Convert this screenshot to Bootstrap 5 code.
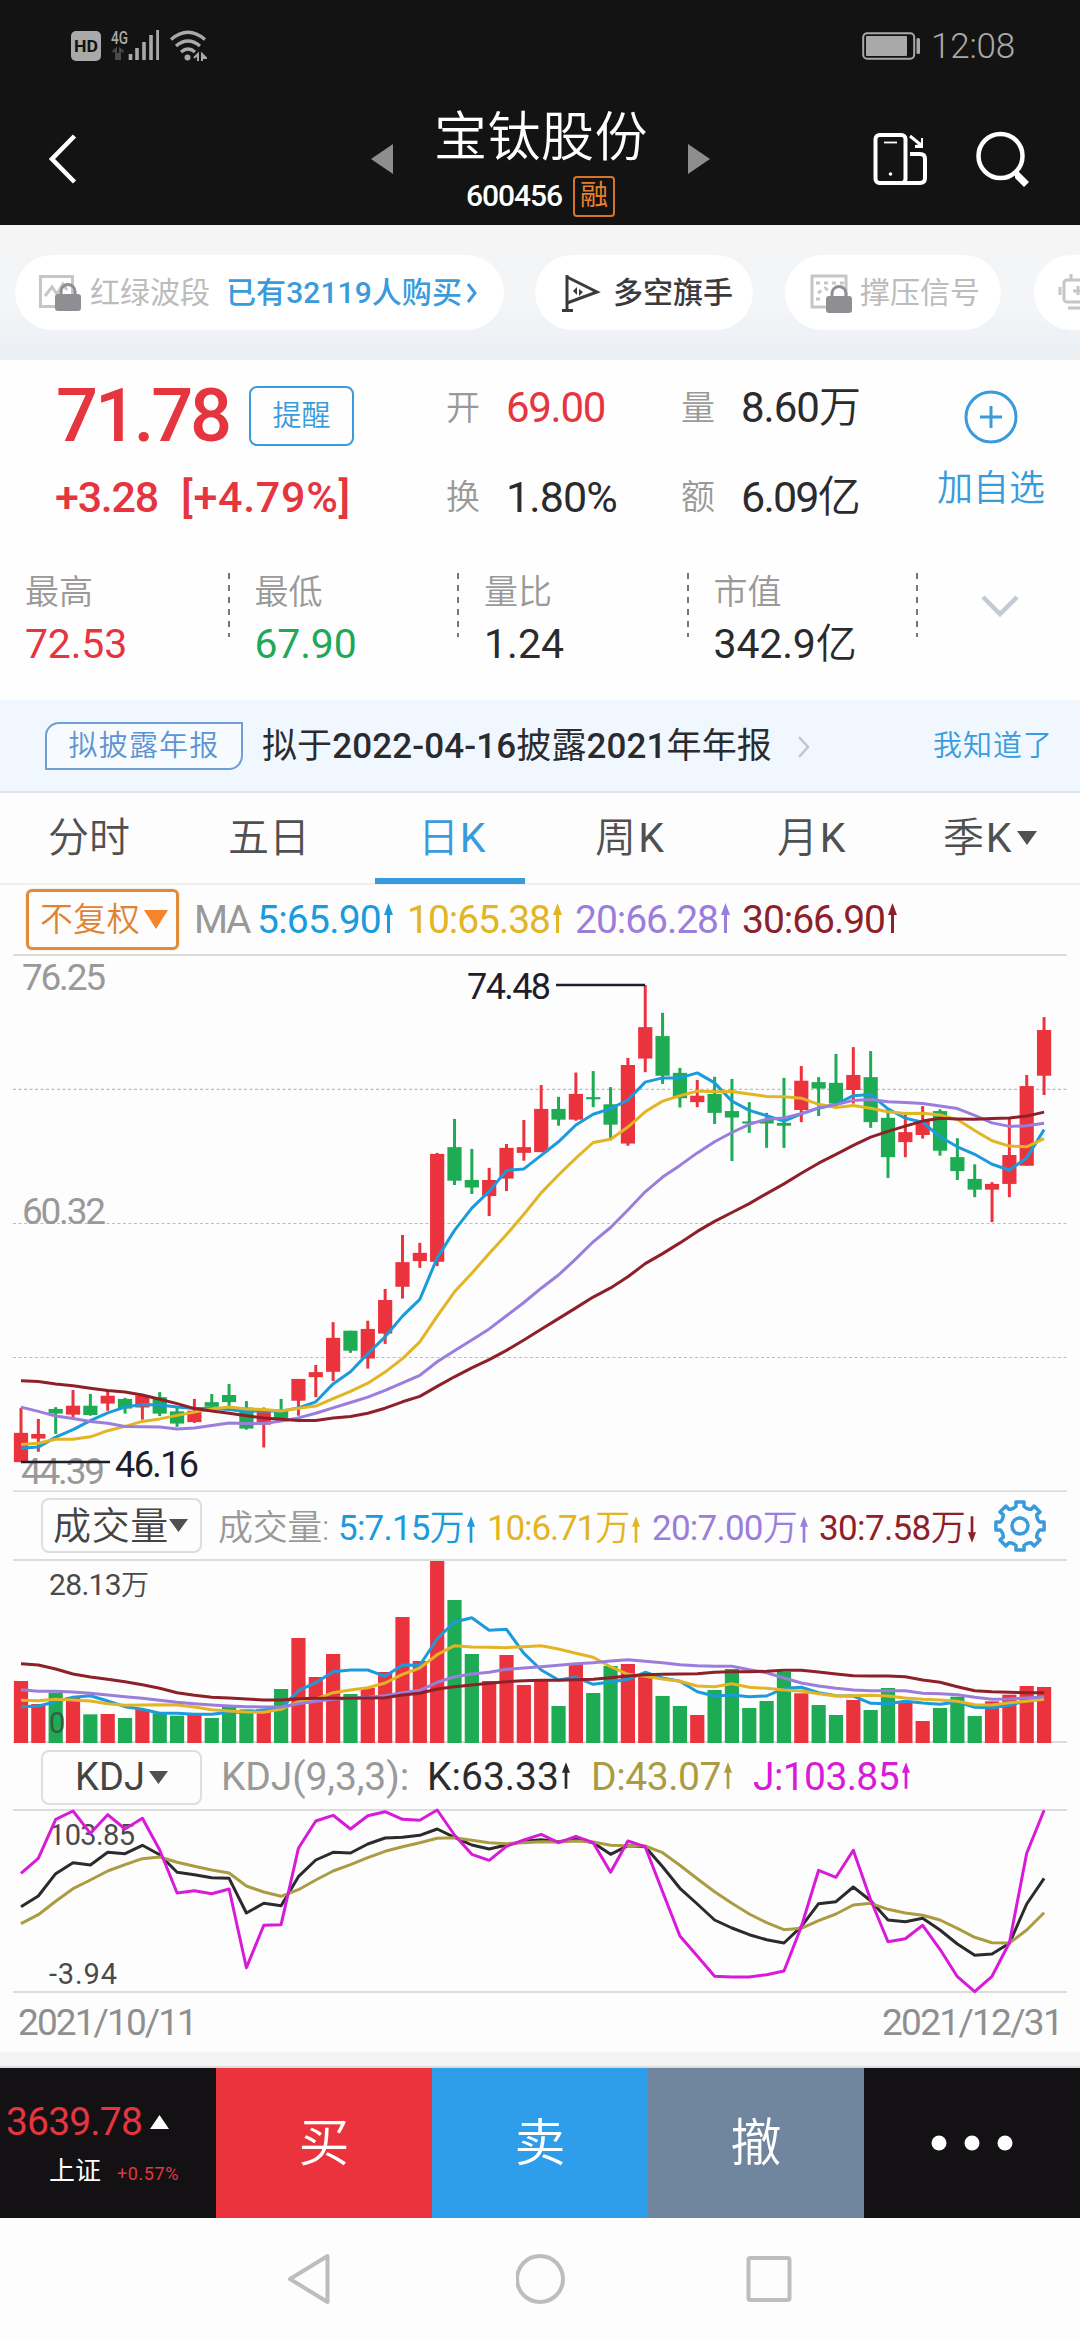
<!DOCTYPE html>
<html lang="zh-CN">
<head>
<meta charset="utf-8">
<meta name="viewport" content="width=device-width, initial-scale=1">
<title>宝钛股份 600456</title>
<link href="https://cdn.jsdelivr.net/npm/bootstrap@5.3.0/dist/css/bootstrap.min.css" rel="stylesheet">
<style>
:root{--up:#e5353f;--dn:#1fa858;--sky:#3a9bdc;--ink:#2b2b2e;--mute:#999}
body{font-family:Roboto,"Noto Sans CJK SC",sans-serif;line-height:1;color:var(--ink);background:#fdfdfe;width:1080px;overflow-x:hidden}
svg{display:block;flex:none}
.tk{display:grid;align-items:center}
.tk>*{white-space:nowrap;justify-self:start}
.lt{font-weight:350}
.md{font-weight:500}
.up{color:var(--up)}.dn{color:var(--dn)}.sky{color:var(--sky)}.mut{color:var(--mute)}
.c5{color:#1b9bdc}.c10{color:#e3b423}.c20{color:#9b7ddb}.c30{color:#8e2029}.cd{color:#ab9c44}.cj{color:#d81bd8}
.topbar{background:#131313;height:225px;color:#fff}
.status-row{height:92px;color:#a9a9a9;grid-template-columns:71px 38px 60px 693px 69px 1fr}
.status-row .clock{font-size:35px;font-weight:300}
.title-row{height:133px;grid-template-columns:49px 322px 55px 262px 184px 104px 1fr}
.title-row .title-col{padding-top:10px}
.title-row .stock{font-size:53px;height:54px;line-height:54px}
.title-row .code-line{padding-left:40px;margin-top:11px}
.title-row .code{font-size:30px}
.rong{width:42px;height:41px;border:2px solid #d5752c;border-radius:4px;color:#e8812f;font-size:28px;line-height:36px;text-align:center;margin-left:11px}
.pills{height:135px;padding:30px 0 0 15px;background:linear-gradient(#f6f5f6,#f3f5f8 60%,#ebeff3)}
.pill-i{height:75px;border-radius:38px;background:#fff;flex:none;font-size:30px;padding-left:23px;color:#bcbcbc;font-weight:500}
.pill-a{width:489px;margin-right:31px}
.pill-b{width:218px;margin-right:32px;padding-left:26px;color:#3b3b3f}
.pill-c{width:216px;margin-right:33px;padding-left:25px}
.pill-d{width:300px;padding-left:24px}
.quote{height:340px;background:#fefefe;padding-top:19px}
.q1{height:62px;font-size:42px;grid-template-columns:56px 193px 197px 60px 175px 60px 223px 1fr}
.q1 .last-price{font-size:74px}
.q1 .lbl,.q2 .lbl{font-size:34px}
.q1 .lbl,.q1 .fig{margin-top:-16px}
.remind{width:105px;height:60px;border:2.5px solid var(--sky);border-radius:8px;font-size:29px;line-height:56px;text-align:center}
.q2{height:50px;margin-top:31px;font-size:43px;grid-template-columns:55px 126px 265px 60px 175px 60px 196px 1fr}
.q2 .add{font-size:36px;margin-top:-16px}
.q3{grid-template-columns:repeat(4,229.5px) 1fr;height:96px;margin-top:51px;align-items:start}
.q3 .cellq{width:229.5px;padding-left:25px;position:relative}
.q3 .lbl{font-size:34px;line-height:38px;height:38px}
.q3 .val{font-size:41px;line-height:44px;margin-top:11px}
.q3 .chev{margin:22px 0 0 63px}
.vdash{position:absolute;right:0;top:0;width:2px;height:64px;background:repeating-linear-gradient(#777 0 6px,transparent 6px 12px)}
.notice{height:93px;background:#f0f7fe;border-bottom:2px solid #e2e6ea;font-size:35px;grid-template-columns:45px 217px 535px 136px 1fr;padding-top:2px}
.tagn{width:198px;height:48px;border:2px solid #6f9fd6;border-radius:14px 0 14px 0;color:#5d94d2;font-size:29px;line-height:45px;text-align:center;background:#f7fbff;margin-top:-2px}
.tabs{height:92px;font-size:41px;color:#505050;grid-template-columns:48px 180px 190px 177px 182px 166px 1fr;border-bottom:2px solid #eee;position:relative}
.tabs .bar{position:absolute;left:375px;bottom:-1px;width:150px;height:6px;background:#3a9bdc}
.ma{height:69px;font-size:39px;grid-template-columns:26px 168px 63px 150px 168px 167px 1fr;padding-top:1px}
.fq{width:153px;height:61px;border:3px solid #e08b3a;border-radius:6px;color:#dd8434;font-size:33px;box-shadow:0 0 2px #f6c98f;padding-left:11px;margin-top:-2px}
.ind{height:67px;font-size:35px}
.ind.vol{grid-template-columns:41px 177px 120px 149px 165px 167px 174px 1fr}
.ind.vol>span:not(.sel){padding-top:5px}
.ind.vol .arr{vertical-align:-4px}
.ind.kdj{font-size:39px;grid-template-columns:41px 180px 206px 164px 162px 1fr;height:66px}
.sel{width:161px;height:55px;border:2.5px solid #dedede;border-radius:8px;color:#444;font-size:38px}
.arr{display:inline-block;margin-left:3px;vertical-align:baseline}
.dates{height:59px;font-size:37px;color:#8f8f8f;padding:0 18px 0 18px}
.gap-strip{height:16px;background:#f3f2f4;border-bottom:2px solid #ddd}
.actions{height:150px;color:#fff;font-size:51px;background:#131113}
.actions>div{width:216px}
.bg-buy{background:#eb333e}.bg-sell{background:#2f9eea}.bg-undo{background:#70869f}
.idx{font-size:39px;padding-left:6px}
.idx .idx-name{font-size:26px}
.idx .idx-pct{font-size:18px;margin:6px 0 0 16px}
.navrow{height:122px;grid-template-columns:286px 230px 229px 1fr}
svg text{font-family:Roboto,"Noto Sans CJK SC",sans-serif}
</style>
<script src="https://cdn.jsdelivr.net/npm/bootstrap@5.3.0/dist/js/bootstrap.bundle.min.js"></script>
</head>
<body>
<svg width="0" height="0" class="position-absolute"><defs>
<symbol id="upArr" viewBox="0 0 9 30"><path d="M4.5 0 9 12H6V30H3V12H0z" fill="currentColor"/></symbol>
<symbol id="dnArr" viewBox="0 0 9 30"><path d="M4.5 30 9 18H6V0H3V18H0z" fill="currentColor"/></symbol>
<symbol id="lock" viewBox="0 0 26 28"><path d="M6 12V8.500a7 7 0 0 1 14 0V12" fill="none" stroke="#8f8f93" stroke-width="3"/><rect y="11" width="26" height="17" rx="3" fill="#8f8f93"/></symbol>
</defs></svg>

<header class="topbar">
  <div class="status-row tk pb-0">
    <i></i>
    <svg width="31" height="31" viewBox="0 0 31 31"><rect width="30" height="30" rx="5" fill="#a9a9a9"/><text x="3" y="20.500" font-size="16" font-weight="700" textLength="24" lengthAdjust="spacingAndGlyphs" fill="#131313">HD</text></svg>
    <svg width="50" height="34" viewBox="0 0 50 34"><text x="2" y="15" font-size="18" font-weight="500" textLength="17" lengthAdjust="spacingAndGlyphs" fill="#a9a9a9">4G</text><path d="M3.500 23 7 20v11M11 31V20l3.500 3M9 31v-7" stroke="#4a4a4a" stroke-width="2" fill="none"/><path d="M21.500 31v-6M28 31V19M35 31V13M42 31V6M49 31V1" stroke="#a9a9a9" stroke-width="3.600"/></svg>
    <svg width="38" height="32" viewBox="0 0 38 32"><g fill="none" stroke="#a9a9a9" stroke-width="3.200"><path d="M2 9.500Q19-5 36 9.500"/><path d="M7 16q12-10 24 0"/><path d="M12 22q7-6 14 0"/></g><circle cx="18.500" cy="27.500" r="3" fill="#a9a9a9"/><path d="M25 28l4-4v7M33 31v-7l4 4h-4" stroke="#a9a9a9" stroke-width="2" fill="none"/></svg>
    <svg width="60" height="28" viewBox="0 0 60 28"><rect x="1.200" y="1.200" width="51" height="25.600" rx="4" fill="none" stroke="#a9a9a9" stroke-width="2"/><rect x="4" y="4" width="41" height="20" rx="1" fill="#a9a9a9"/><rect x="54.500" y="6" width="3.500" height="16" rx="1.500" fill="#a9a9a9"/></svg>
    <span class="clock" data-w="82">12:08</span>
  </div>
  <div class="title-row tk">
    <i></i>
    <svg width="30" height="52" viewBox="0 0 30 52"><path d="M25.500 3 3 26l22.500 23" fill="none" stroke="#fff" stroke-width="4.500"/></svg>
    <svg width="22" height="30" viewBox="0 0 22 30"><path d="M22 0v30L0 15z" fill="#8d8d8d"/></svg>
    <div class="title-col d-flex flex-column align-items-start">
      <span class="stock lt ms-2" data-w="212">宝钛股份</span>
      <div class="code-line d-flex align-items-center"><span class="code md" data-w="94">600456</span><span class="rong">融</span></div>
    </div>
    <svg width="22" height="30" viewBox="0 0 22 30"><path d="M0 0v30l22-15z" fill="#8d8d8d"/></svg>
    <svg width="56" height="54" viewBox="0 0 56 54"><g fill="none" stroke="#fff" stroke-width="4"><rect x="3.500" y="3" width="30" height="48" rx="4"/><path d="M38 22h10q5 0 5 5v19q0 5-5 5H30"/><path d="M38 4l11 9" stroke-width="3"/></g><path d="M12 10.500h13" stroke="#fff" stroke-width="1.800"/><circle cx="18.500" cy="42" r="1.800" fill="#fff"/><path d="M51 6v10H43v-3l6-1V6z" fill="#fff"/></svg>
    <svg width="56" height="56" viewBox="0 0 56 56"><circle cx="24.500" cy="25" r="22" fill="none" stroke="#fff" stroke-width="4.500"/><path d="M42 40l11 11-5 5-9-9v-4l-2-2 3-3z" fill="#fff"/></svg>
  </div>
</header>

<section class="pills d-flex overflow-hidden">
  <div class="pill-i pill-a d-flex align-items-center">
    <svg width="44" height="38" viewBox="0 0 44 38"><rect x="2.500" y="2.500" width="32" height="30" fill="none" stroke="#c6c6c6" stroke-width="3"/><path d="M7 22l7-9 5 7 6-10 4 6" fill="none" stroke="#c6c6c6" stroke-width="3"/><use href="#lock" x="17" y="9" width="26" height="28"/></svg>
    <span class="fw-normal ms-2" data-w="118">红绿波段</span><span class="sky ms-3" data-w="234">已有32119人购买</span>
    <svg width="12" height="22" viewBox="0 0 12 22" class="ms-1"><path d="M2 2l7 9-7 9" fill="none" stroke="#3a9bdc" stroke-width="3"/></svg>
  </div>
  <div class="pill-i pill-b d-flex align-items-center">
    <svg width="40" height="40" viewBox="0 0 40 40"><path d="M6 2v36M1 37.500h11" stroke="#3b3b3f" stroke-width="3"/><path d="M6 4l30 15L6 30" fill="none" stroke="#3b3b3f" stroke-width="3"/><path d="M12 18l4-4v8zM22 19l-4-3v7z" fill="#3b3b3f"/></svg>
    <span class="ms-2 ps-1" data-w="118">多空旗手</span>
  </div>
  <div class="pill-i pill-c d-flex align-items-center">
    <svg width="42" height="40" viewBox="0 0 42 40"><rect x="2" y="3" width="34" height="31" fill="none" stroke="#c6c6c6" stroke-width="3"/><path d="M6 10h28M6 26h6M8 20l7-5 6 4" stroke="#c6c6c6" stroke-width="3" stroke-dasharray="4 4" fill="none"/><use href="#lock" x="16" y="12" width="26" height="28"/></svg>
    <span class="fw-normal ms-2" data-w="118">撑压信号</span>
  </div>
  <div class="pill-i pill-d d-flex align-items-center">
    <svg width="44" height="40" viewBox="0 0 44 40"><path d="M13 1v6M2 14v8M10 35h20" stroke="#c6c6c6" stroke-width="3"/><rect x="6" y="7" width="30" height="22" rx="3" fill="none" stroke="#c6c6c6" stroke-width="3"/><path d="M20 13v9M15 18h9" stroke="#c6c6c6" stroke-width="3"/><use href="#lock" x="22" y="12" width="26" height="28"/></svg>
  </div>
</section>

<section class="quote">
  <div class="tk q1">
    <i></i><span class="up md last-price" data-w="171">71.78</span><span class="remind sky lt">提醒</span>
    <span class="lbl lt mut">开</span><span class="fig up" data-w="97">69.00</span>
    <span class="lbl lt mut">量</span><span class="fig" data-w="117">8.60<span class="lt">万</span></span>
    <svg width="54" height="56" viewBox="0 0 54 56"><circle cx="27" cy="29" r="25" fill="none" stroke="#3a9bdc" stroke-width="3"/><path d="M16 29h22M27 18v22" stroke="#3a9bdc" stroke-width="3"/></svg>
  </div>
  <div class="tk q2">
    <i></i><span class="up md" data-w="101">+3.28</span><span class="up md" data-w="168">[+4.79%]</span>
    <span class="lbl lt mut">换</span><span data-w="109">1.80%</span>
    <span class="lbl lt mut">额</span><span data-w="116">6.09<span class="lt">亿</span></span>
    <span class="sky lt add" data-w="106">加自选</span>
  </div>
  <div class="tk q3">
    <div class="cellq"><div class="lbl lt mut">最高</div><div class="val up"><span data-w="100">72.53</span></div><i class="vdash"></i></div>
    <div class="cellq"><div class="lbl lt mut">最低</div><div class="val dn"><span data-w="100">67.90</span></div><i class="vdash"></i></div>
    <div class="cellq"><div class="lbl lt mut">量比</div><div class="val"><span data-w="78">1.24</span></div><i class="vdash"></i></div>
    <div class="cellq"><div class="lbl lt mut">市值</div><div class="val"><span data-w="141">342.9<span class="lt">亿</span></span></div><i class="vdash"></i></div>
    <svg class="chev" width="38" height="24" viewBox="0 0 38 24"><path d="M2 2l17 17L36 2" fill="none" stroke="#c3cad5" stroke-width="4.500"/></svg>
  </div>
</section>

<section class="notice tk">
  <i></i><span class="tagn lt"><span data-w="149">拟披露年报</span></span><span data-w="508">拟于<span class="md">2022-04-16</span>披露<span class="md">2021</span>年年报</span>
  <svg width="14" height="22" viewBox="0 0 14 22"><path d="M2 1l9 10-9 10" fill="none" stroke="#bfc5cd" stroke-width="2.500"/></svg>
  <span class="sky lt" style="font-size:29px" data-w="118">我知道了</span>
</section>

<nav class="tabs tk">
  <i></i><span class="lt">分时</span><span class="lt">五日</span><span class="sky" data-w="66"><span class="lt">日</span>K</span><span data-w="69"><span class="lt">周</span>K</span><span data-w="68"><span class="lt">月</span>K</span>
  <span class="d-flex align-items-center"><span data-w="68"><span class="lt">季</span>K</span><svg class="ms-1" width="20" height="14" viewBox="0 0 20 14"><path d="M0 0h20L10 14z" fill="#505050"/></svg></span>
  <b class="bar"></b>
</nav>

<section class="ma tk">
  <i></i><span class="fq d-flex align-items-center lt"><span data-w="98">不复权</span><svg width="24" height="19" viewBox="0 0 24 19" class="ms-1"><path d="M0 0h24L12 19z" fill="#f5842a"/></svg></span>
  <span class="mut" data-w="53">MA</span>
  <span class="c5"><span data-w="122">5:65.90</span><svg class="arr" width="9" height="30"><use href="#upArr"/></svg></span>
  <span class="c10"><span data-w="141">10:65.38</span><svg class="arr" width="9" height="30"><use href="#upArr"/></svg></span>
  <span class="c20"><span data-w="141">20:66.28</span><svg class="arr" width="9" height="30"><use href="#upArr"/></svg></span>
  <span class="c30"><span data-w="141">30:66.90</span><svg class="arr" width="9" height="30"><use href="#upArr"/></svg></span>
</section>

<svg id="price" width="1080" height="538" viewBox="0 954 1080 538"></svg>

<section class="ind vol tk">
  <i></i><span class="sel lt d-flex align-items-center" style="padding-left:10px"><span data-w="114">成交量</span><svg width="19" height="13" viewBox="0 0 19 13"><path d="M0 0h19L9.500 13z" fill="#505050"/></svg></span>
  <span class="lt mut" data-w="109">成交量:</span>
  <span class="c5"><span data-w="124">5:7.15<span class="lt">万</span></span><svg class="arr" width="8" height="29"><use href="#upArr"/></svg></span>
  <span class="c10"><span data-w="140">10:6.71<span class="lt">万</span></span><svg class="arr" width="8" height="29"><use href="#upArr"/></svg></span>
  <span class="c20"><span data-w="143">20:7.00<span class="lt">万</span></span><svg class="arr" width="8" height="29"><use href="#upArr"/></svg></span>
  <span class="c30"><span data-w="144">30:7.58<span class="lt">万</span></span><svg class="arr" width="8" height="29"><use href="#dnArr"/></svg></span>
  <svg id="gear" width="54" height="54" viewBox="-27 -27 54 54"></svg>
</section>

<svg id="volume" width="1080" height="185" viewBox="0 1559 1080 185"></svg>

<section class="ind kdj tk">
  <i></i><span class="sel d-flex align-items-center" style="padding-left:32px"><span data-w="68">KDJ</span><svg class="ms-1" width="19" height="13" viewBox="0 0 19 13"><path d="M0 0h19L9.500 13z" fill="#505050"/></svg></span>
  <span class="mut" data-w="186">KDJ(9,3,3):</span>
  <span><span data-w="130">K:63.33</span><svg class="arr" width="8" height="29"><use href="#upArr"/></svg></span>
  <span class="cd"><span data-w="128">D:43.07</span><svg class="arr" width="8" height="29"><use href="#upArr"/></svg></span>
  <span class="cj"><span data-w="144">J:103.85</span><svg class="arr" width="8" height="29"><use href="#upArr"/></svg></span>
</section>

<svg id="kdj" class="overflow-visible" width="1080" height="183" viewBox="0 1810 1080 183"></svg>

<section class="dates d-flex justify-content-between align-items-center"><span data-w="176">2021/10/11</span><span data-w="178">2021/12/31</span></section>
<div class="gap-strip"></div>

<footer>
  <div class="actions d-flex">
    <div class="idx d-flex flex-column justify-content-center">
      <div class="d-flex align-items-center up"><span data-w="134">3639.78</span><svg class="ms-2" width="19" height="14" viewBox="0 0 19 14"><path d="M0 14h19L9.500 0z" fill="#fff"/></svg></div>
      <div class="d-flex align-items-center mt-3 ps-5"><span class="idx-name" style="margin-left:-5px">上证</span><span class="up idx-pct" data-w="60">+0.57%</span></div>
    </div>
    <div class="bg-buy lt d-flex align-items-center justify-content-center">买</div>
    <div class="bg-sell lt d-flex align-items-center justify-content-center">卖</div>
    <div class="bg-undo lt d-flex align-items-center justify-content-center">撤</div>
    <div class="d-flex align-items-center justify-content-center"><svg width="84" height="16" viewBox="0 0 84 16"><g fill="#fff"><circle cx="9" cy="8" r="7.500"/><circle cx="42" cy="8" r="7.500"/><circle cx="75" cy="8" r="7.500"/></g></svg></div>
  </div>
  <div class="navrow tk"><i></i>
    <svg width="46" height="52" viewBox="0 0 46 52"><path d="M41.500 3v46L4 26z" fill="none" stroke="#bdbdbd" stroke-width="4" stroke-linejoin="round"/></svg>
    <svg width="50" height="50" viewBox="0 0 50 50"><circle cx="24" cy="25" r="23" fill="none" stroke="#bdbdbd" stroke-width="4"/></svg>
    <svg width="48" height="46" viewBox="0 0 48 46"><rect x="3.500" y="2" width="41" height="42" rx="2" fill="none" stroke="#bdbdbd" stroke-width="4"/></svg>
  </div>
</footer>

<script>
const UP='#eb333e', DN='#1dab53', STEP=17.34, X=i=>21+i*STEP;
const line=(ys,f,c,w=3)=>`<polyline fill="none" stroke="${c}" stroke-width="${w}" stroke-linejoin="round" points="${ys.map((v,i)=>X(i).toFixed(1)+','+f(v).toFixed(1)).join(' ')}"/>`;
const label=(x,y,s,t,w,c,wt=400)=>`<text x="${x}" y="${y}" font-size="${s}" fill="${c}" font-weight="${wt}" textLength="${w}">${t}</text>`;
const rule=(y,c='#dcdcdc',w=2)=>`<path d="M13 ${y}H1067" stroke="${c}" stroke-width="${w}"/>`;

// price candles: direction, high, low, body top, body bottom
const py=v=>950+v/2.8;
const C=`R1282,1434,1352,1434 R1313,1405,1355,1368 G1280,1355,1285,1298 R1232,1310,1276,1301 G1243,1304,1276,1302 R1232,1290,1248,1270 G1254,1298,1257,1284 R1244,1315,1247,1281 G1238,1305,1252,1298 G1282,1335,1292,1326 R1257,1324,1290,1322 G1243,1280,1266,1279 G1215,1280,1246,1266 G1263,1343,1281,1340 R1281,1393,1290,1329 G1257,1312,1290,1312 R1201,1304,1201,1262 R1162,1252,1182,1196 R1042,1207,1086,1181 G1066,1128,1066,1122 R1038,1172,1061,1144 R949,1103,980,1074 R798,976,874,943 R820,890,848,871 R568,885,571,873 G473,658,552,646 G557,683,644,665 R610,745,644,689 R543,675,554,640 R476,590,552,568 R378,566,445,566 G411,492,445,475 R343,478,403,475 G339,440,412,418 G384,533,432,489 R302,548,322,542 R98,342,216,304 G176,375,241,352 G330,441,344,415 R364,440,408,426 G355,487,403,456 G361,591,451,469 G426,512,480,486 G456,554,475,486 G358,554,484,492 R325,482,366,448 G356,465,370,388 G291,436,372,430 R272,430,350,392 G283,498,356,482 G445,638,470,580 R460,580,510,538 R437,528,478,518 G446,576,451,562 G527,644,580,619 G600,692,641,671 R650,762,655,671 R470,692,574,655 R350,604,381,604 R188,406,224,352`.split(' ');
const MA5=[1395,1392,1364,1343,1318,1296,1280,1273,1274,1280,1284,1284,1287,1292,1290,1291,1282,1265,1215,1181,1130,1083,1025,978,862,785,723,676,617,613,575,537,490,460,444,420,370,358,358,344,372,423,449,464,479,459,443,432,408,405,445,471,482,523,551,572,600,616,582,503];
const MA10=[1385,1381,1370,1370,1363,1346,1334,1320,1313,1303,1294,1285,1280,1285,1287,1291,1283,1277,1256,1236,1213,1182,1144,1097,1025,957,905,850,797,740,680,630,583,539,530,496,453,423,408,395,397,396,403,410,411,415,432,441,435,443,453,458,457,462,475,505,534,549,551,528];
const MA20=[1280,1292,1305,1312,1320,1325,1334,1335,1336,1341,1338,1331,1324,1326,1326,1319,1310,1297,1282,1267,1252,1233,1212,1191,1153,1122,1092,1061,1024,987,947,910,865,817,777,728,677,636,603,568,537,511,488,474,470,458,442,433,421,419,425,427,430,437,444,463,484,494,492,485];
const MA30=[1206,1208,1215,1220,1227,1233,1238,1246,1258,1270,1284,1291,1297,1304,1310,1314,1317,1317,1310,1306,1297,1283,1265,1250,1222,1195,1170,1147,1121,1092,1062,1032,1002,972,946,915,878,850,820,788,760,735,710,682,655,625,597,572,547,524,508,493,479,471,473,474,472,470,465,454];
let h=rule(955)+rule(1491.5,'#dcdcdc',2.5);
[1089.3,1223.5,1357.5].forEach(y=>h+=`<path d="M13 ${y}H1067" stroke="#bdbdbd" stroke-width="1.200" stroke-dasharray="3 2.500"/>`);
C.forEach((s,i)=>{const c=s[0]=='R'?UP:DN,[a,b,t,m]=s.slice(1).split(',').map(v=>py(+v));
 h+=`<path d="M${X(i)} ${a}V${b}" stroke="${c}" stroke-width="3"/><rect x="${X(i)-7.1}" y="${t}" width="14.200" height="${m-t}" fill="${c}"/>`});
h+=line(MA5,py,'#1b9bdc')+line(MA10,py,'#e3b423')+line(MA20,py,'#9b7ddb')+line(MA30,py,'#8e2029');
h+=label(22,990,37,'76.25',84,'#999')+label(22,1224,37,'60.32',84,'#999')+label(21,1483.5,37,'44.39',84,'#999');
h+=`<path d="M556 985H645M21 1462H110" stroke="#1d1d2b" stroke-width="2.500"/>`+label(467,999,36,'74.48',84,'#1d1d2b')+label(115,1476.5,36,'46.16',84,'#1d1d2b');
price.innerHTML=h;

const vy=v=>1480+v/3;
const V='R603 R672 G638 R652 G703 R702 G714 R688 G700 G707 R705 G714 G680 G688 R688 G627 R474 R591 R522 G642 R624 R576 R411 R543 R243 G360 G522 R603 R525 R615 R600 G678 R550 G639 G558 R552 R590 G648 G678 R705 G630 G567 G684 G663 G576 R640 G675 G705 R660 G690 G624 R668 R723 G684 G650 G708 R664 R644 R618 R621'.split(' ');
const V5=[680,678,665,652,647,663,680,688,700,700,703,703,697,697,690,685,632,608,575,570,570,589,555,556,476,426,413,451,448,520,570,600,592,613,606,598,577,594,604,635,648,645,650,648,625,622,638,647,648,670,671,664,669,673,666,682,683,676,662,654];
const V10=[661,662,658,660,663,671,676,675,674,675,681,689,693,696,697,688,665,657,638,630,623,609,583,564,524,497,501,502,503,500,497,507,520,532,560,583,589,597,604,618,620,611,622,625,630,633,641,648,647,646,648,654,658,660,664,674,675,668,664,658];
const V20=[629,634,634,636,640,645,650,655,661,667,671,675,678,680,681,681,671,664,658,655,652,647,638,631,607,590,582,577,568,564,560,556,551,548,543,539,544,548,554,557,559,559,569,578,594,609,618,625,630,632,632,632,640,641,644,652,658,657,654,650];
const V30=[551,555,567,582,591,598,605,614,625,638,646,652,654,657,660,660,656,655,655,655,654,653,645,640,627,620,615,610,605,602,601,601,599,598,593,588,584,583,582,581,577,575,575,574,571,571,576,582,587,588,588,590,600,607,620,632,635,637,638,638];
h=rule(1560)+rule(1742);
V.forEach((s,i)=>h+=`<rect x="${X(i)-7.1}" y="${vy(+s.slice(1))}" width="14.200" height="${1743-vy(+s.slice(1))}" fill="${s[0]=='R'?UP:DN}"/>`);
h+=line(V5,vy,'#1b9bdc')+line(V10,vy,'#e3b423')+line(V20,vy,'#9b7ddb')+line(V30,vy,'#8e2029');
h+=label(49,1595,30,'28.13<tspan font-weight="350" font-size="28">万</tspan>',100,'#4a4a4a')+label(49,1733,29,'0',15,'#3c5a45');
volume.innerHTML=h;

const ky=v=>1740+v/3;
const K=[500,468,401,368,375,337,341,316,344,397,404,413,415,519,490,497,410,360,337,339,312,294,292,286,267,292,315,327,315,304,299,305,297,308,343,317,320,380,445,492,540,564,584,599,609,560,491,485,441,482,540,545,535,570,612,646,642,610,492,415];
const D=[551,524,484,446,420,393,374,356,351,367,379,390,399,438,456,469,449,420,393,374,353,334,320,308,295,293,301,308,311,308,305,306,303,306,316,317,318,338,376,416,455,490,522,548,569,565,542,522,495,490,508,519,526,540,565,592,608,609,570,518];
const J=[400,355,238,213,280,224,267,235,330,459,452,461,447,683,556,554,325,243,226,267,227,215,238,241,210,285,343,361,319,300,283,308,289,308,397,303,320,455,588,648,709,711,711,704,693,560,391,412,331,480,605,596,556,628,710,755,709,608,340,211];
kdj.innerHTML=rule(1810)+rule(1992)+label(49,1845,29,'103.85',86,'#4a4a4a')+label(49,1984,29,'-3.94',68,'#4a4a4a')+line(K,ky,'#2b2b2e')+line(D,ky,'#ab9c44')+line(J,ky,'#d81bd8');

// eight-tooth gear outline
let g=[];for(let i=0;i<8;i++){const a=i*Math.PI/4;[[-.34,19],[-.2,20],[-.17,24.5],[.17,24.5],[.2,20],[.34,19]].forEach(([d,r])=>g.push((r*Math.sin(a+d)).toFixed(1)+','+(-r*Math.cos(a+d)).toFixed(1)))}
gear.innerHTML=`<polygon points="${g.join(' ')}" fill="none" stroke="#3a9bdc" stroke-width="3.500" stroke-linejoin="round"/><circle r="8" fill="none" stroke="#3a9bdc" stroke-width="3.500"/>`;

document.querySelectorAll('[data-w]').forEach(e=>{const n=[...e.textContent].length,w=e.getBoundingClientRect().width-parseFloat(getComputedStyle(e).paddingLeft);e.style.letterSpacing=((+e.dataset.w+2-w)/n)+'px'});
</script>
</body>
</html>
